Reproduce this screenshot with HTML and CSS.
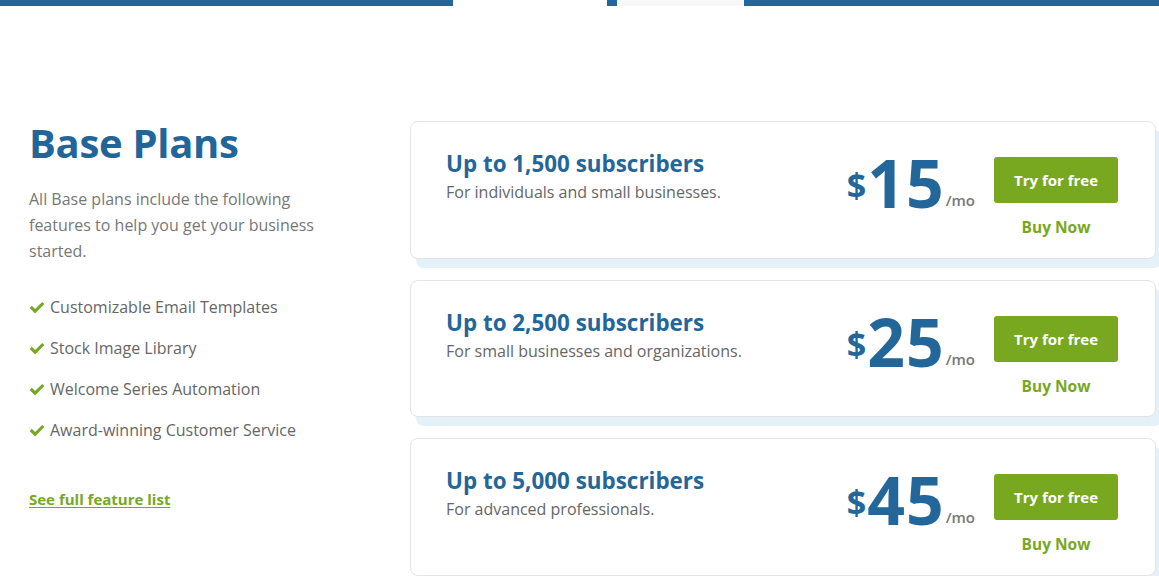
FILE: index.html
```html
<!DOCTYPE html>
<html lang="en">
<head>
<meta charset="utf-8">
<title>Base Plans</title>
<link rel="stylesheet" href="styles.css">
</head>
<body>
<div class="topbar">
  <span class="seg seg-a"></span>
  <span class="seg seg-gap"></span>
  <span class="seg seg-b"></span>
  <span class="seg seg-tab"></span>
  <span class="seg seg-c"></span>
</div>
<main class="main">
  <section class="intro">
    <h1 class="intro-title">Base Plans</h1>
    <p class="intro-text">All Base plans include the following features to help you get your business started.</p>
    <ul class="features">
      <li class="feature"><svg class="check" viewBox="0 0 16 13" aria-hidden="true"><path d="M0.6 6.9 L2.8 4.7 L6.1 8 L13.2 0.9 L15.4 3.1 L6.1 12.4 Z" fill="#77a823"/></svg>Customizable Email Templates</li>
      <li class="feature"><svg class="check" viewBox="0 0 16 13" aria-hidden="true"><path d="M0.6 6.9 L2.8 4.7 L6.1 8 L13.2 0.9 L15.4 3.1 L6.1 12.4 Z" fill="#77a823"/></svg>Stock Image Library</li>
      <li class="feature"><svg class="check" viewBox="0 0 16 13" aria-hidden="true"><path d="M0.6 6.9 L2.8 4.7 L6.1 8 L13.2 0.9 L15.4 3.1 L6.1 12.4 Z" fill="#77a823"/></svg>Welcome Series Automation</li>
      <li class="feature"><svg class="check" viewBox="0 0 16 13" aria-hidden="true"><path d="M0.6 6.9 L2.8 4.7 L6.1 8 L13.2 0.9 L15.4 3.1 L6.1 12.4 Z" fill="#77a823"/></svg>Award-winning Customer Service</li>
    </ul>
    <a class="feature-link" href="#">See full feature list</a>
  </section>
  <section class="plans">
    <div class="plan">
      <div class="plan-info">
        <h2 class="plan-title">Up to 1,500 subscribers</h2>
        <p class="plan-desc">For individuals and small businesses.</p>
      </div>
      <div class="price"><span class="cur">$</span><span class="amount">15</span><span class="per">/mo</span></div>
      <div class="actions">
        <a class="btn-try" href="#">Try for free</a>
        <a class="buy" href="#">Buy Now</a>
      </div>
    </div>
    <div class="plan">
      <div class="plan-info">
        <h2 class="plan-title">Up to 2,500 subscribers</h2>
        <p class="plan-desc">For small businesses and organizations.</p>
      </div>
      <div class="price"><span class="cur">$</span><span class="amount">25</span><span class="per">/mo</span></div>
      <div class="actions">
        <a class="btn-try" href="#">Try for free</a>
        <a class="buy" href="#">Buy Now</a>
      </div>
    </div>
    <div class="plan">
      <div class="plan-info">
        <h2 class="plan-title">Up to 5,000 subscribers</h2>
        <p class="plan-desc">For advanced professionals.</p>
      </div>
      <div class="price"><span class="cur">$</span><span class="amount">45</span><span class="per">/mo</span></div>
      <div class="actions">
        <a class="btn-try" href="#">Try for free</a>
        <a class="buy" href="#">Buy Now</a>
      </div>
    </div>
  </section>
</main>
</body>
</html>
```

FILE: styles.css
```css
* { box-sizing: border-box; }
html, body { margin: 0; padding: 0; background: #fff; }
body {
  font-family: "Open Sans", "Liberation Sans", sans-serif;
  color: #666;
  overflow: hidden;
}
.topbar { display: flex; height: 6px; }
.seg { display: block; height: 6px; }
.seg-a { width: 453px; background: #236699; }
.seg-gap { width: 154px; background: #fff; }
.seg-b { width: 10px; background: #236699; }
.seg-tab { width: 127px; background: #f8f8f8; }
.seg-c { flex: 1; background: #236699; }

.main {
  display: flex;
  padding: 115px 3px 0 29px;
}
.intro { width: 381px; flex: none; }
.intro-title {
  margin: -3.5px 0 0;
  font-size: 40px;
  line-height: 50px;
  font-weight: 700;
  color: #226699;
  letter-spacing: -0.3px;
}
.intro-text {
  margin: 18px 0 0;
  width: 300px;
  font-size: 16px;
  line-height: 26px;
  color: #777;
}
.features { list-style: none; margin: 23px 0 0; padding: 0; }
.feature {
  display: flex;
  align-items: center;
  height: 41px;
  font-size: 16px;
  color: #666;
}
.check { width: 16px; height: 13px; margin-right: 5px; flex: none; }
.feature-link {
  display: inline-block;
  margin-top: 38px;
  font-size: 15px;
  line-height: 20px;
  font-weight: 700;
  color: #77a823;
  text-decoration: underline;
  text-underline-offset: 2px;
}

.plans {
  flex: 1;
  display: flex;
  flex-direction: column;
  gap: 21px;
}
.plan {
  height: 137.5px;
  flex: none;
  display: flex;
  align-items: flex-start;
  padding: 28px 37px 0 35px;
  background: #fff;
  border: 1px solid #e4e4e4;
  border-radius: 8px;
  box-shadow: 6px 9px 0 #e4f1f8;
}
.plan-info { flex: 1; }
.plan-title {
  margin: 0;
  font-size: 22.4px;
  line-height: 28px;
  font-weight: 700;
  color: #236699;
}
.plan-desc {
  margin: 4px 0 0;
  font-size: 16px;
  line-height: 20px;
  color: #666;
}
.price {
  display: flex;
  align-items: baseline;
  margin-top: 2px;
  margin-right: 19px;
  color: #236699;
  font-weight: 700;
}
.cur {
  font-size: 34px;
  position: relative;
  top: -10px;
  margin-right: 1px;
}
.amount {
  font-size: 66px;
  line-height: 60px;
  letter-spacing: 1px;
}
.per {
  font-size: 15px;
  font-weight: 600;
  color: #777;
  margin-left: 1px;
  position: relative;
  top: -2px;
}
.actions {
  display: flex;
  flex-direction: column;
  align-items: center;
  width: 124px;
  margin-top: 7px;
}
.btn-try {
  display: flex;
  align-items: center;
  justify-content: center;
  width: 124px;
  height: 46px;
  background: #78a81f;
  border-radius: 3px;
  color: #fff;
  font-size: 15px;
  font-weight: 700;
  text-decoration: none;
}
.buy {
  margin-top: 14px;
  font-size: 15.5px;
  line-height: 20px;
  font-weight: 700;
  color: #78a81f;
  text-decoration: none;
}
```
